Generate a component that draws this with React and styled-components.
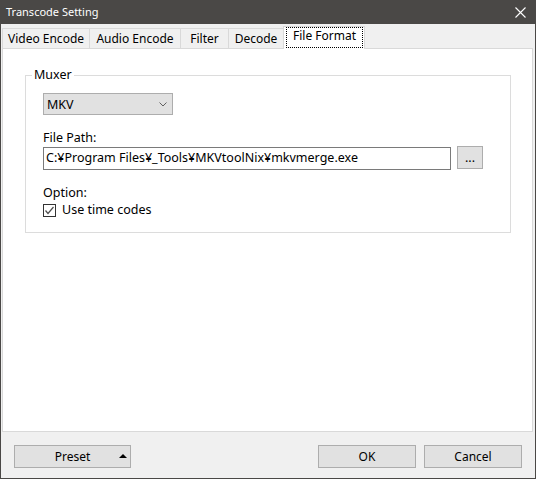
import React from "react";
import styled, { createGlobalStyle } from "styled-components";

const GlobalStyle = createGlobalStyle`
  html, body {
    margin: 0;
    padding: 0;
    background: #ffffff;
  }
  body {
    font-family: "Noto Sans", "Liberation Sans", sans-serif;
    font-size: 12px;
    color: #000;
  }
  * {
    box-sizing: border-box;
  }
`;

const Window = styled.div`
  width: 536px;
  height: 479px;
  display: flex;
  flex-direction: column;
  background: #f0f0f0;
  border: 1px solid #4a4846;
  border-top: none;
`;

const TitleBar = styled.div`
  height: 24px;
  flex: none;
  display: flex;
  align-items: center;
  justify-content: space-between;
  padding: 0 9px 0 5px;
  background: #4a4846;
  color: #ffffff;
  font-size: 11px;
  line-height: 16px;
`;

const CloseButton = styled.svg`
  width: 11px;
  height: 11px;
  margin-top: 1px;
`;

const Client = styled.div`
  flex: 1;
  display: flex;
  flex-direction: column;
  padding: 2px 2px 0 1px;
`;

const TabStrip = styled.div`
  height: 22px;
  flex: none;
  display: flex;
  align-items: flex-end;
`;

const Tab = styled.div`
  width: ${(p) => p.$w}px;
  height: 20px;
  border-top: 1px solid #d9d9d9;
  border-left: 1px solid #d9d9d9;
  background: #f0f0f0;
  text-align: center;
  line-height: 19px;
  white-space: nowrap;
`;

const ActiveTab = styled.div`
  width: ${(p) => p.$w}px;
  height: 23px;
  margin-bottom: -1px;
  position: relative;
  z-index: 1;
  display: flex;
  padding: 0 1px 1px 2px;
  background: #ffffff;
  border: 1px solid #d9d9d9;
  border-bottom: none;
`;

const FocusBox = styled.span`
  flex: 1;
  border: 1px dotted #000;
  text-align: center;
  line-height: 16px;
  white-space: nowrap;
`;

const Panel = styled.div`
  height: 384px;
  flex: none;
  background: #ffffff;
  border: 1px solid #d9d9d9;
  padding: 18px 21px 0 22px;
  font-size: 12.5px;
`;

const Group = styled.fieldset`
  margin: 0;
  padding: 0;
  min-width: 0;
  border: 1px solid #dcdcdc;
`;

const Legend = styled.legend`
  margin-left: 6px;
  padding: 0 2px;
  line-height: 16px;
`;

const GroupBody = styled.div`
  padding: 10px 0 14px 17px;
  display: flex;
  flex-direction: column;
  align-items: flex-start;
`;

const Combo = styled.div`
  width: 130px;
  height: 22px;
  display: flex;
  align-items: center;
  justify-content: space-between;
  padding: 0 5px 0 3px;
  background: #e1e1e1;
  border: 1px solid #adadad;
`;

const FieldLabel = styled.div`
  margin-top: ${(p) => p.$top}px;
  line-height: 16px;
`;

const PathRow = styled.div`
  display: flex;
  gap: 6px;
`;

const TextBox = styled.div`
  width: 408px;
  height: 23px;
  margin-top: 1px;
  padding: 0 2px;
  border: 1px solid #7a7a7a;
  background: #ffffff;
  line-height: 20px;
  white-space: nowrap;
  overflow: hidden;
`;

const Button = styled.div`
  width: ${(p) => p.$w}px;
  height: 23px;
  position: relative;
  display: flex;
  align-items: center;
  justify-content: center;
  background: #e1e1e1;
  border: 1px solid #adadad;
  line-height: 16px;
`;

const CheckRow = styled.label`
  display: flex;
  align-items: center;
  gap: 6px;
  margin-top: 1px;
  line-height: 16px;
`;

const CheckBox = styled.span`
  width: 13px;
  height: 13px;
  display: flex;
  align-items: center;
  justify-content: center;
  border: 1px solid #333333;
  background: #ffffff;
  margin-top: 1px;
`;

const Footer = styled.div`
  flex: 1;
  display: flex;
  align-items: flex-start;
  padding: 13px 11px 0 12px;
`;

const Spacer = styled.div`
  flex: 1;
`;

const ButtonGroup = styled.div`
  display: flex;
  gap: 8px;
`;

const UpArrow = styled.span`
  position: absolute;
  right: 3px;
  top: 8px;
  width: 0;
  height: 0;
  border-left: 4px solid transparent;
  border-right: 4px solid transparent;
  border-bottom: 4px solid #000;
`;

const tabs = [
  { label: "Video Encode", w: 87 },
  { label: "Audio Encode", w: 91 },
  { label: "Filter", w: 48 },
  { label: "Decode", w: 55 },
];

export default function App() {
  return (
    <>
      <GlobalStyle />
      <Window>
        <TitleBar>
          <span>Transcode Setting</span>
          <CloseButton viewBox="0 0 11 11">
            <path d="M0.5 0.5 L10.5 10.5 M10.5 0.5 L0.5 10.5" stroke="#fff" strokeWidth="1.1" fill="none" />
          </CloseButton>
        </TitleBar>
        <Client>
          <TabStrip>
            {tabs.map((t) => (
              <Tab key={t.label} $w={t.w}>
                {t.label}
              </Tab>
            ))}
            <ActiveTab $w={82}>
              <FocusBox>File Format</FocusBox>
            </ActiveTab>
          </TabStrip>
          <Panel>
            <Group>
              <Legend>Muxer</Legend>
              <GroupBody>
                <Combo>
                  <span>MKV</span>
                  <svg width="8" height="5" viewBox="0 0 8 5">
                    <path d="M0.5 0.5 L4 4 L7.5 0.5" stroke="#606060" fill="none" />
                  </svg>
                </Combo>
                <FieldLabel $top={15}>File Path:</FieldLabel>
                <PathRow>
                  <TextBox>C:¥Program Files¥_Tools¥MKVtoolNix¥mkvmerge.exe</TextBox>
                  <Button $w={26}>...</Button>
                </PathRow>
                <FieldLabel $top={15}>Option:</FieldLabel>
                <CheckRow>
                  <CheckBox>
                    <svg width="11" height="11" viewBox="0 0 11 11">
                      <path d="M1.5 5.5 L4 8.5 L9.5 2" stroke="#4d4d4d" strokeWidth="1.2" fill="none" />
                    </svg>
                  </CheckBox>
                  <span>Use time codes</span>
                </CheckRow>
              </GroupBody>
            </Group>
          </Panel>
          <Footer>
            <Button $w={117}>
              Preset
              <UpArrow />
            </Button>
            <Spacer />
            <ButtonGroup>
              <Button $w={98}>OK</Button>
              <Button $w={98}>Cancel</Button>
            </ButtonGroup>
          </Footer>
        </Client>
      </Window>
    </>
  );
}
